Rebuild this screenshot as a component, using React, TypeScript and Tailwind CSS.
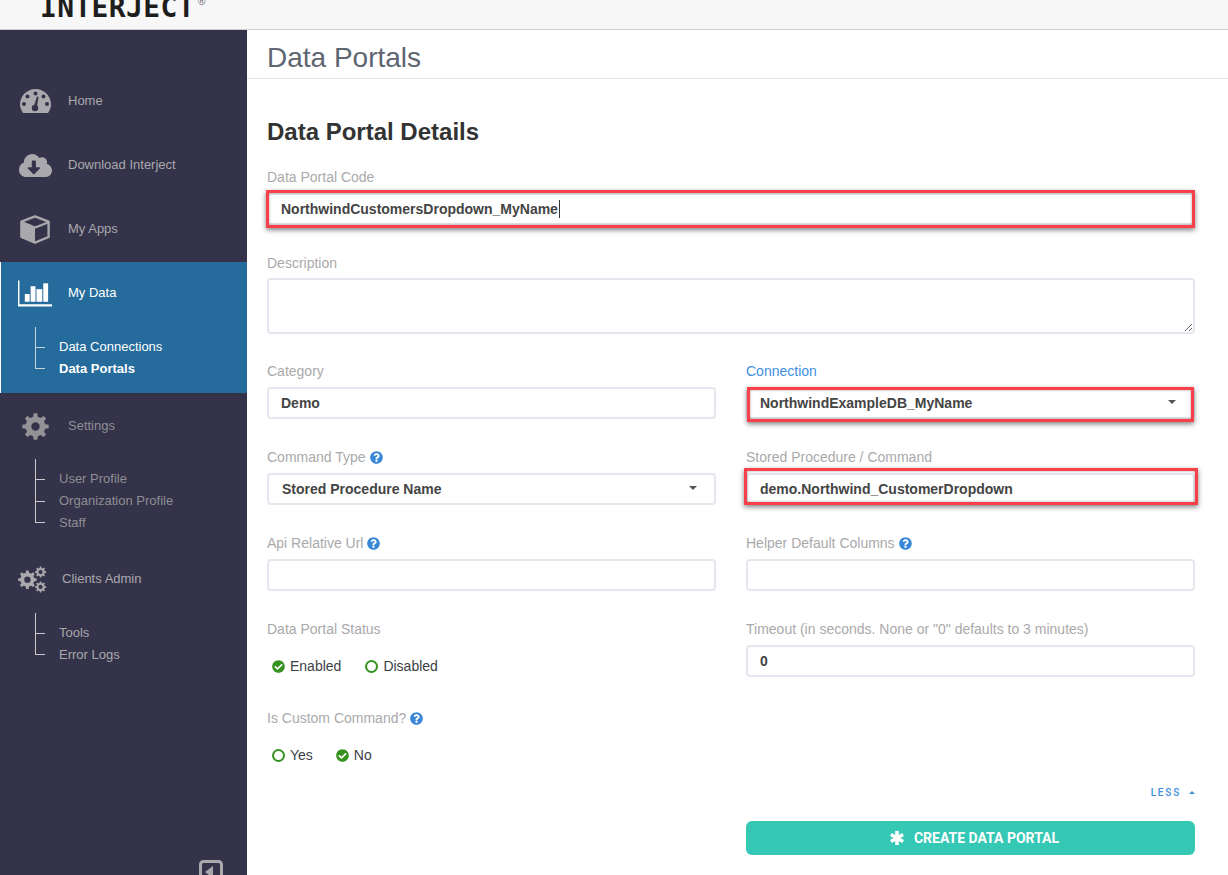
import type { ReactNode } from 'react';
import { FaCheckCircle, FaCloudDownloadAlt, FaQuestionCircle } from 'react-icons/fa';

const arial = "font-['Liberation_Sans',Arial,sans-serif]";

// builds a toothed wheel outline with a round hole in the middle
function gearPath(cx: number, cy: number, R: number, r: number, hole: number, n = 8) {
  const step = (Math.PI * 2) / n;
  const pt = (rad: number, a: number) => `${(cx + rad * Math.cos(a)).toFixed(2)} ${(cy + rad * Math.sin(a)).toFixed(2)}`;
  let d = '';
  for (let i = 0; i < n; i++) {
    const a = i * step - Math.PI / 2;
    d += `${i === 0 ? 'M' : 'L'}${pt(r, a - 0.3 * step)}L${pt(R, a - 0.17 * step)}L${pt(R, a + 0.17 * step)}L${pt(r, a + 0.3 * step)}`;
  }
  d += `ZM${cx - hole} ${cy}a${hole} ${hole} 0 1 0 ${hole * 2} 0a${hole} ${hole} 0 1 0 ${-hole * 2} 0Z`;
  return d;
}

function GaugeIcon() {
  return (
    <svg width="31" height="24" viewBox="0 0 31 24">
      <path d="M3 24C1 21 0 18 0 15.5 0 7 7 0 15.5 0S31 7 31 15.5C31 18 30 21 28 24Z" fill="#a9a9ad" />
      <g fill="#343349">
        <circle cx="15.5" cy="4.5" r="2" />
        <circle cx="7.5" cy="7.5" r="2" />
        <circle cx="23.5" cy="7.5" r="2" />
        <circle cx="4" cy="15" r="2" />
        <circle cx="27" cy="15" r="2" />
        <circle cx="15" cy="19" r="3.2" />
        <path d="M13.5 18 17 7.5l1.6.5-2 11z" />
      </g>
    </svg>
  );
}

function CubeIcon() {
  return (
    <svg width="30" height="29" viewBox="0 0 30 29">
      <path d="M15 1.4 28.6 6.6V22L15 27.6 1.4 22V6.6Z" fill="none" stroke="#a9a9ad" strokeWidth="2.4" strokeLinejoin="round" />
      <path d="M1.5 7 15 12.6 28 7.4" fill="none" stroke="#a9a9ad" strokeWidth="2.2" />
      <path d="M2 7.5 15 13V27L2 21.5Z" fill="#a9a9ad" />
    </svg>
  );
}

function ChartIcon() {
  return (
    <svg width="35" height="27" viewBox="0 0 35 27" fill="white">
      <path d="M0 0h1.5v24.5H35V27H0z" />
      <rect x="7" y="14" width="5" height="8" />
      <rect x="13" y="6" width="5" height="16" />
      <rect x="19" y="9" width="6" height="13" />
      <rect x="26" y="3" width="5" height="19" />
    </svg>
  );
}

function CogIcon() {
  return (
    <svg width="27" height="27" viewBox="0 0 27 27">
      <path d={gearPath(13.5, 13.5, 13.3, 10, 4.2)} fill="#939397" fillRule="evenodd" />
    </svg>
  );
}

function CogsIcon() {
  return (
    <svg width="33" height="31" viewBox="0 0 33 31" className="mr-[5px]">
      <g fill="#a9a9ad" fillRule="evenodd">
        <path d={gearPath(10.7, 15.7, 10.6, 8, 3.6)} />
        <path d={gearPath(25.7, 7, 6.4, 4.8, 2.4)} />
        <path d={gearPath(25.7, 24, 6.4, 4.8, 2.4)} />
      </g>
    </svg>
  );
}

function NavItem({
  icon,
  label,
  active,
  dim,
  textClass = 'ml-[68px]',
}: {
  icon: ReactNode;
  label: string;
  active?: boolean;
  dim?: boolean;
  textClass?: string;
}) {
  return (
    <div
      className={`relative flex h-[64px] items-center text-[13px] ${
        active ? 'text-white' : dim ? 'text-[#8e8e94]' : 'text-[#a9a9ad]'
      }`}
    >
      <div className="absolute left-[18px] flex w-[34px] items-center justify-center">{icon}</div>
      <span className={textClass}>{label}</span>
    </div>
  );
}

function SubTree({
  items,
  boldLast,
  light,
  dim,
}: {
  items: string[];
  boldLast?: boolean;
  light?: boolean;
  dim?: boolean;
}) {
  const line = light ? 'border-[#c3d3de]' : 'border-[#c9c9cc]';
  const text = light ? 'text-white' : dim ? 'text-[#8e8e94]' : 'text-[#a9a9ad]';
  return (
    <div className="ml-[35px] flex flex-col">
      <div className={`h-[9px] border-l ${line}`} />
      {items.map((item, i) => {
        const last = i === items.length - 1;
        return (
          <div key={item} className="flex h-[22px] items-center">
            {last ? (
              <div className={`h-[11px] w-[10px] self-start border-b border-l ${line}`} />
            ) : (
              <div className={`flex w-[10px] items-center self-stretch border-l ${line}`}>
                <div className={`w-full border-b ${line}`} />
              </div>
            )}
            <span className={`ml-[14px] text-[13px] ${text} ${boldLast && last ? 'font-bold' : ''}`}>{item}</span>
          </div>
        );
      })}
    </div>
  );
}

function Sidebar() {
  return (
    <aside className="flex w-[247px] shrink-0 flex-col bg-[#343349] pt-[39px]">
      <NavItem icon={<GaugeIcon />} label="Home" />
      <NavItem icon={<FaCloudDownloadAlt size={33} color="#a9a9ad" />} label="Download Interject" />
      <NavItem icon={<CubeIcon />} label="My Apps" />
      <div className="mt-[1px] h-[131px] border-l border-white bg-[#256b9c]">
        <div className="-ml-px -mt-px">
          <NavItem icon={<ChartIcon />} label="My Data" active />
          <div className="mt-[2px]">
            <SubTree items={['Data Connections', 'Data Portals']} boldLast light />
          </div>
        </div>
      </div>
      <div className="pt-px">
        <NavItem icon={<CogIcon />} label="Settings" dim />
      </div>
      <div className="mt-px">
        <SubTree items={['User Profile', 'Organization Profile', 'Staff']} dim />
      </div>
      <div className="mt-[13px]">
        <NavItem icon={<CogsIcon />} label="Clients Admin" textClass="ml-[62px]" />
      </div>
      <div className="mt-[2px]">
        <SubTree items={['Tools', 'Error Logs']} />
      </div>
      <div className="mt-auto flex h-[15px] justify-end overflow-hidden pr-[24px]">
        <svg width="24" height="24" viewBox="0 0 24 24" className="shrink-0">
          <rect x="1.5" y="1.5" width="21" height="21" rx="3" fill="none" stroke="#a9a9ad" strokeWidth="3" />
          <path d="M6 12 14 6V18Z" fill="#a9a9ad" />
        </svg>
      </div>
    </aside>
  );
}

function Label({ children, help, blue }: { children: string; help?: boolean; blue?: boolean }) {
  return (
    <div className={`flex h-[16px] items-center gap-[4px] text-[14px] ${blue ? 'text-[#3f8fe0]' : 'text-[#aaa9ab]'}`}>
      <span>{children}</span>
      {help && <FaQuestionCircle size={13} color="#3a87d8" />}
    </div>
  );
}

function Field({
  value,
  caret,
  children,
  arrow,
  nudge,
}: {
  value?: string;
  caret?: boolean;
  children?: ReactNode;
  arrow?: boolean;
  nudge?: boolean;
}) {
  return (
    <div className="relative mt-[8px] flex h-[32px] items-center rounded-[4px] border-2 border-[#e4e8ee] bg-white pl-[12px] text-[14px] font-bold text-[#444444]">
      <span className={nudge ? 'ml-px' : ''}>{value}</span>
      {caret && <span className="ml-px h-[18px] w-px bg-[#333333]" />}
      {arrow && (
        <span className="absolute right-[17px] top-[11px] h-0 w-0 border-x-[4px] border-t-[4px] border-x-transparent border-t-[#555555]" />
      )}
      {children}
    </div>
  );
}

function RedBox({ className }: { className: string }) {
  return (
    <span
      className={`pointer-events-none absolute border-[3px] border-[#f9404a] shadow-[0_2px_5px_rgba(0,0,0,0.5),inset_0_0_3px_rgba(0,0,0,0.35)] ${className}`}
    />
  );
}

function Radio({ label, on }: { label: string; on?: boolean }) {
  return (
    <span className="flex items-center gap-[5px] text-[14px] text-[#3b3f46]">
      {on ? (
        <FaCheckCircle size={13} color="#36921f" />
      ) : (
        <span className="h-[13px] w-[13px] rounded-full border-2 border-[#36921f]" />
      )}
      {label}
    </span>
  );
}

export default function App() {
  return (
    <div className={`flex h-[875px] w-[1228px] flex-col overflow-hidden bg-white ${arial}`}>
      <header className="flex h-[30px] shrink-0 items-start overflow-hidden border-b border-[#cfcfd2] bg-[#f7f7f7] pl-[40px]">
        <span className="-mt-[6px] font-['DejaVu_Sans_Mono',monospace] text-[28px] font-bold leading-[28px] tracking-[0.35px] text-[#1d1d1d]">
          INTERJECT
        </span>
        <span className="-mt-[3px] ml-[3px] text-[10px] leading-none text-[#666666]">®</span>
      </header>
      <div className="flex min-h-0 flex-1">
        <Sidebar />
        <main className="min-w-0 flex-1">
          <div className="flex h-[49px] items-center border-b border-[#e6e6e6] pl-[20px] pt-[8px] text-[28px] text-[#5e6672]">
            Data Portals
          </div>
          <div className="pl-[20px] pr-[33px]">
            <h2 className="mt-[38px] h-[30px] text-[24px] font-bold leading-[30px] text-[#333333]">Data Portal Details</h2>
            <div className="mt-[22px]">
              <Label>Data Portal Code</Label>
              <Field value="NorthwindCustomersDropdown_MyName" caret>
                <RedBox className="-left-[3px] -right-[2px] -top-[5px] -bottom-[5px]" />
              </Field>
            </div>
            <div className="mt-[30px]">
              <Label>Description</Label>
              <textarea
                readOnly
                className="mt-[7px] block h-[56px] w-full resize-y rounded-[4px] border-2 border-[#e4e8ee] bg-white outline-none"
              />
            </div>
            <div className="mt-[29px] grid grid-cols-2 gap-x-[30px] gap-y-[30px]">
              <div>
                <Label>Category</Label>
                <Field value="Demo" />
              </div>
              <div>
                <Label blue>Connection</Label>
                <Field value="NorthwindExampleDB_MyName" arrow>
                  <RedBox className="-left-[1px] -right-[1px] -top-[2px] -bottom-[5px]" />
                </Field>
              </div>
              <div>
                <Label help>Command Type</Label>
                <Field value="Stored Procedure Name" arrow nudge />
              </div>
              <div>
                <Label>Stored Procedure / Command</Label>
                <Field value="demo.Northwind_CustomerDropdown">
                  <RedBox className="-left-[4px] -right-[5px] -top-[7px] -bottom-[2px]" />
                </Field>
              </div>
              <div>
                <Label help>Api Relative Url</Label>
                <Field />
              </div>
              <div>
                <Label help>Helper Default Columns</Label>
                <Field />
              </div>
              <div>
                <Label>Data Portal Status</Label>
                <div className="mt-[16px] flex h-[26px] items-center gap-[24px] pl-[5px]">
                  <Radio label="Enabled" on />
                  <Radio label="Disabled" />
                </div>
              </div>
              <div>
                <Label>{'Timeout (in seconds. None or "0" defaults to 3 minutes)'}</Label>
                <Field value="0" />
              </div>
            </div>
            <div className="mt-[31px]">
              <Label help>Is Custom Command?</Label>
              <div className="mt-[16px] flex h-[26px] items-center gap-[23px] pl-[5px]">
                <Radio label="Yes" />
                <Radio label="No" on />
              </div>
            </div>
            <div className="mt-[17px] flex items-center justify-end gap-[8px] font-['Roboto',sans-serif] text-[10px] font-medium tracking-[1.8px] text-[#3f8fe0]">
              LESS
              <span className="h-0 w-0 border-x-[3px] border-b-[3px] border-x-transparent border-b-[#3f8fe0]" />
            </div>
            <div className="mt-[21px] grid grid-cols-2 gap-x-[30px]">
              <div />
              <button className="flex h-[34px] items-center justify-center gap-[10px] rounded-[6px] bg-[#35c8b4] pl-[8px] font-['Roboto',sans-serif] text-[14px] font-bold text-white">
                <svg width="14" height="14" viewBox="0 0 14 14" stroke="white" strokeWidth="3.6">
                  <path d="M7 0v14M.9 3.5l12.2 7M.9 10.5l12.2-7" />
                </svg>
                CREATE DATA PORTAL
              </button>
            </div>
          </div>
        </main>
      </div>
    </div>
  );
}
